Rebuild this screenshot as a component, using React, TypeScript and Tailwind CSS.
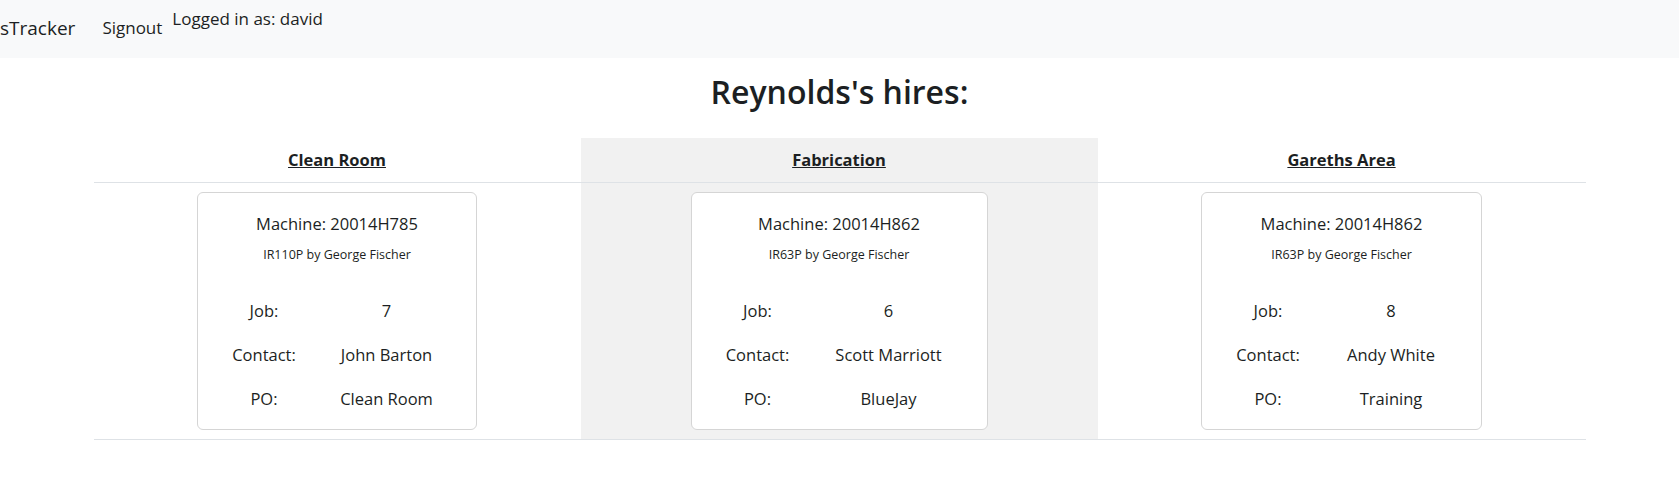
const hires = [
  {
    area: 'Clean Room',
    machine: '20014H785',
    model: 'IR110P',
    maker: 'George Fischer',
    job: '7',
    contact: 'John Barton',
    po: 'Clean Room',
    cellW: 'w-[487px]',
    cardW: 'w-[280px]',
    bg: 'bg-white',
  },
  {
    area: 'Fabrication',
    machine: '20014H862',
    model: 'IR63P',
    maker: 'George Fischer',
    job: '6',
    contact: 'Scott Marriott',
    po: 'BlueJay',
    cellW: 'w-[517px]',
    cardW: 'w-[297px]',
    bg: 'bg-[#f1f1f1]',
  },
  {
    area: 'Gareths Area',
    machine: '20014H862',
    model: 'IR63P',
    maker: 'George Fischer',
    job: '8',
    contact: 'Andy White',
    po: 'Training',
    cellW: 'w-[488px]',
    cardW: 'w-[281px]',
    bg: 'bg-white',
  },
];

type Hire = (typeof hires)[number];

function HireCard({ hire }: { hire: Hire }) {
  const rows = [
    { label: 'Job:', value: hire.job },
    { label: 'Contact:', value: hire.contact },
    { label: 'PO:', value: hire.po },
  ];

  return (
    <div className={`${hire.cardW} mx-auto rounded-[6px] border border-[#d5d5d5] bg-white pt-[19px] pb-[8px]`}>
      <p className="text-center text-[16.5px] leading-6">Machine: {hire.machine}</p>
      <p className="mt-[9.5px] text-center text-[12.5px] leading-[18px]">
        {hire.model} by {hire.maker}
      </p>
      <div className="mt-[25px] pl-[12px] pr-[21px]">
        <table className="w-full table-fixed border-collapse">
          <tbody>
            {rows.map((row) => (
              <tr key={row.label}>
                <td className="w-[108px] py-[10px] text-center text-[16.5px] leading-6">{row.label}</td>
                <td className="py-[10px] text-center text-[16.5px] leading-6">{row.value}</td>
              </tr>
            ))}
          </tbody>
        </table>
      </div>
    </div>
  );
}

export default function App() {
  return (
    <div className="min-h-[494px] bg-white font-['Open_Sans',sans-serif] text-[#1c1f23]">
      {/* Navbar */}
      <nav className="flex h-[58px] items-start bg-[#f8f9fa]">
        <span className="mt-[14px] text-[19px] leading-[28px]">sTracker</span>
        <a className="ml-[27px] mt-[16px] text-[17px] leading-6">Signout</a>
        <span className="ml-[10px] mt-[7px] text-[17px] leading-6">Logged in as: david</span>
      </nav>

      <h1 className="mt-[14px] mb-[26px] text-center text-[32px] font-semibold leading-[40px]">Reynolds's hires:</h1>

      <table className="mx-auto w-[1492px] table-fixed border-collapse">
        <thead>
          <tr>
            {hires.map((h) => (
              <th
                key={h.area}
                className={`${h.cellW} ${h.bg} border-b border-[#dee2e6] py-[10px] text-center text-[16.5px] font-bold leading-6 underline`}
              >
                {h.area}
              </th>
            ))}
          </tr>
        </thead>
        <tbody>
          <tr>
            {hires.map((h) => (
              <td key={h.area} className={`${h.bg} border-b border-[#dee2e6] py-[9px] align-top`}>
                <HireCard hire={h} />
              </td>
            ))}
          </tr>
        </tbody>
      </table>
    </div>
  );
}
